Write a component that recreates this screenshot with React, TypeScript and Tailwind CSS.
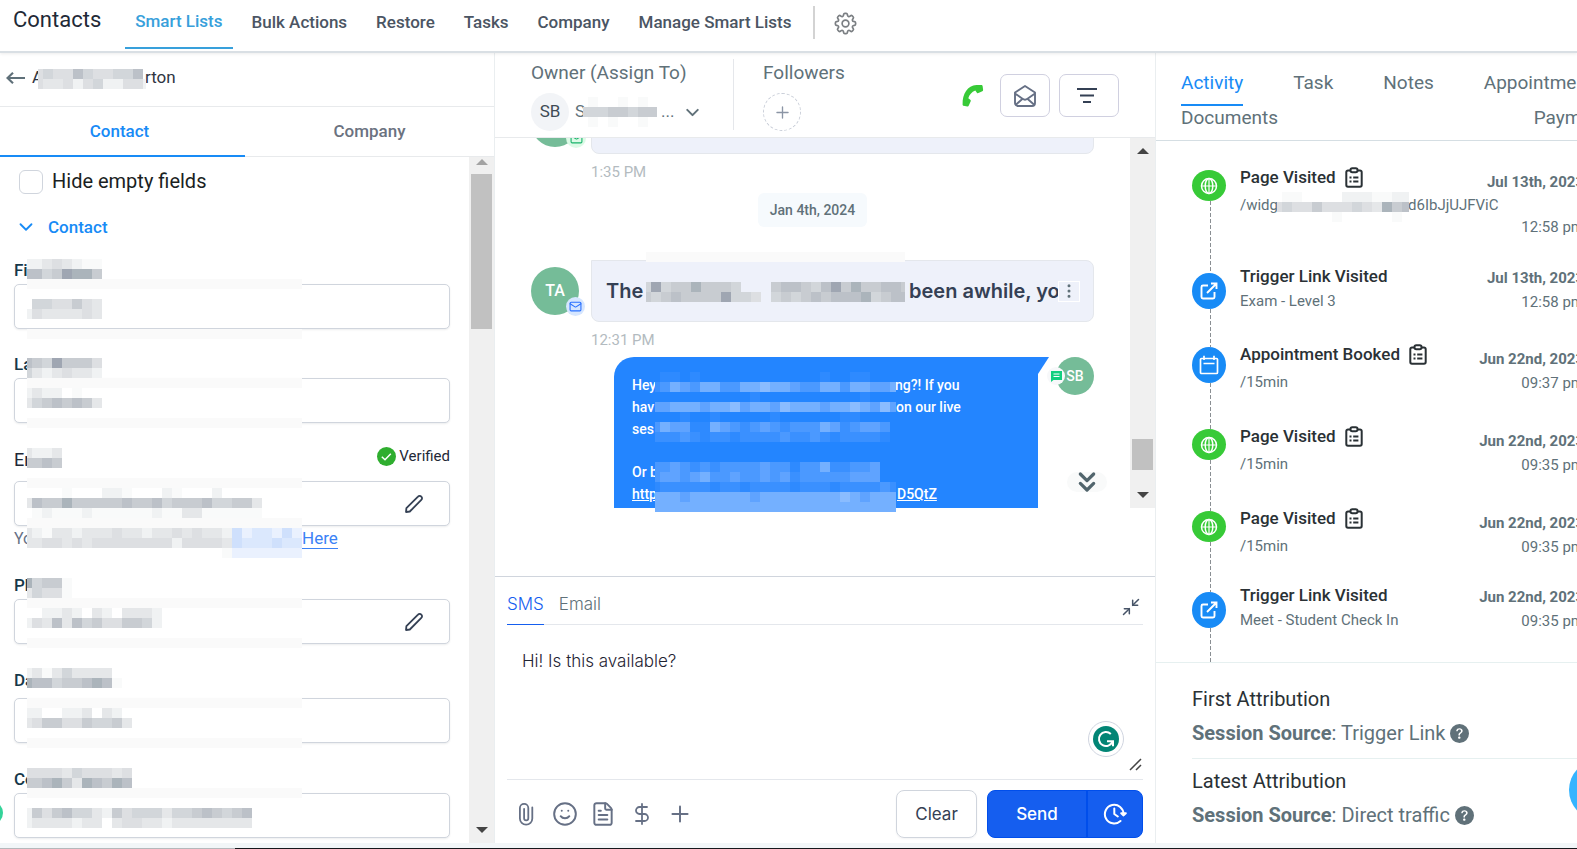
import React, { useState } from "react";
import {
  ChevronDown,
  ChevronsDown,
  DollarSign,
  FileText,
  Mail,
  Minimize2,
  MoreVertical,
  Plus,
  Smile,
} from "lucide-react";
import { HiOutlineCog8Tooth } from "react-icons/hi2";
import { BsFillQuestionCircleFill } from "react-icons/bs";

const SHADES: Record<string, string> = {
  a: "#f9fafa",
  b: "#f0f2f3",
  c: "#e5e7e9",
  d: "#dddfe2",
  e: "#d2d6da",
  f: "#c8ccd1",
  g: "#bcc1c8",
  h: "#abb4bb",
  i: "#9fa6b2",
  p: "#2e8aff",
  q: "#3a90ff",
  r: "#4b99ff",
  s: "#5fa3ff",
  t: "#74b0ff",
  u: "#8abcff",
  v: "#eaf1fe",
  w: "#dbe8fd",
  x: "#cfe0fc",
};

// Verpixelte Fläche: ein Zeichen je 10px-Kachel, "=" ist ein durchgehender Streifen
const Pixels = ({ rows, width, className }: { rows: string[]; width: number; className: string }) => (
  <svg
    width={width}
    height={rows.length * 10}
    viewBox={`5 0 ${width} ${rows.length * 10}`}
    shapeRendering="crispEdges"
    className={`pointer-events-none absolute ${className}`}
    aria-hidden="true"
  >
    {rows.map((row, y) =>
      row === "=" ? (
        <rect key={y} x={0} y={y * 10} width={width + 5} height={10} fill="#fafafa" />
      ) : (
        row
          .split("")
          .map((c, x) =>
            SHADES[c] ? <rect key={`${x}-${y}`} x={x * 10} y={y * 10} width={10} height={10} fill={SHADES[c]} /> : null
          )
      )
    )}
  </svg>
);

const PencilIcon = () => (
  <svg width="20" height="20" viewBox="0 0 20 20" fill="none" stroke="#344054" strokeWidth="1.8" strokeLinejoin="round">
    <path d="M2 18l.4-3.800L14 2.600a2.200 2.200 0 0 1 3.300 0 2.200 2.200 0 0 1 0 3.300L5.800 17.500z" />
  </svg>
);

const PaperclipIcon = () => (
  <svg width="16" height="24" viewBox="0 0 16 24" fill="none" stroke="#667085" strokeWidth="1.8" strokeLinecap="round">
    <path d="M14.3 5.5v11a6.2 6.2 0 0 1-12.4 0V6a4.2 4.2 0 0 1 8.4 0v10.2a2.1 2.1 0 0 1-4.2 0V6.8" />
  </svg>
);

const MailOpenIcon = () => (
  <svg width="24" height="24" viewBox="0 0 24 24" fill="none" stroke="#667085" strokeWidth="1.9" strokeLinejoin="round">
    <path d="M2 8.500L12 2l10 6.500V19a3 3 0 0 1-3 3H5a3 3 0 0 1-3-3z" />
    <path d="M2 9.500l7.500 5.300a4.200 4.200 0 0 0 5 0L22 9.500M2.800 20.800l6.800-6M21.200 20.800l-6.800-6" />
  </svg>
);

const PhoneIcon = () => (
  <svg width="24" height="24" viewBox="0 0 24 24" fill="#37ca37">
    <path d="M16.500 1h4.800c.8 0 1.200.4 1.300 1.100l.5 3.700c.1.700-.2 1.200-.8 1.500l-3.900 1.800c-.6.300-1.100.1-1.500-.4l-1.600-2.100c-3.600 1.500-6.100 4.300-7 7.700l2 1.500c.5.400.7.900.4 1.500l-1.900 4.300c-.3.700-.8.900-1.500.8l-3.700-.7c-.7-.1-1-.6-1-1.300C2.300 9.800 7.500 1.500 16.500 1z" />
  </svg>
);

const ClipboardIcon = () => (
  <svg width="18" height="21" viewBox="0 0 18 21" fill="none" stroke="#2a3135" strokeWidth="2">
    <path d="M5.500 3.500H3a1.700 1.700 0 0 0-1.700 1.700v12.900A1.700 1.700 0 0 0 3 19.800h12a1.700 1.700 0 0 0 1.700-1.700V5.200A1.700 1.700 0 0 0 15 3.500h-2.500" />
    <rect x="5.500" y="1.300" width="7" height="4" rx="1.700" />
    <path d="M4.500 10.500h2M8.200 10.500h5.200M4.500 14.500h2M8.200 14.500h5.200" strokeWidth="1.800" />
  </svg>
);

const GlobeIcon = () => (
  <svg width="18" height="18" viewBox="0 0 18 18" fill="none" stroke="#fff" strokeWidth="1.500">
    <circle cx="9" cy="9" r="7.500" />
    <ellipse cx="9" cy="9" rx="3.800" ry="7.500" />
    <path d="M9 1.500v15M2 9h14" strokeWidth="1.200" />
  </svg>
);

const LinkIcon = () => (
  <svg width="18" height="18" viewBox="0 0 18 18" fill="none" stroke="#fff" strokeWidth="1.900">
    <path d="M8 3.500H3a1.500 1.500 0 0 0-1.500 1.500v10A1.500 1.500 0 0 0 3 16.500h10a1.500 1.500 0 0 0 1.500-1.500v-5" />
    <path d="M11 1.500h5.500V7M16.500 1.500L7 11" />
  </svg>
);

const CalendarIcon = () => (
  <svg width="20" height="20" viewBox="0 0 20 20" fill="none" stroke="#fff" strokeWidth="1.700">
    <rect x="1.500" y="3.500" width="17" height="15" rx="1" />
    <path d="M5 .8V5M15 .8V5M4.500 8.500h11" />
  </svg>
);

const GrammarlyIcon = () => (
  <svg width="26" height="26" viewBox="0 0 26 26" fill="none">
    <circle cx="13" cy="13" r="13" fill="#028575" />
    <path d="M17.800 8A7 7 0 1 0 19.500 15.500M14 15.300h6v5" stroke="#fff" strokeWidth="2" />
  </svg>
);

const ClockIcon = () => (
  <svg width="24" height="24" viewBox="0 0 24 24" fill="none" stroke="#fff" strokeWidth="2" strokeLinecap="round" strokeLinejoin="round">
    <path d="M20.500 12.500A9.300 9.300 0 1 0 17.500 19" />
    <path d="M18.200 11.200l2.400 2.200 2.200-2.200zM11.300 6.500v5.500l3.500 2.500" />
  </svg>
);

// Scrollleiste
const Scrollbar = ({ children, up, className }: { children: React.ReactNode; up: string; className: string }) => (
  <div className={`flex w-[25px] shrink-0 flex-col items-center bg-[#f0f0f0] pb-[2px] ${className}`}>
    <svg width="12" height="6" viewBox="0 0 12 6" className="shrink-0">
      <path d="M6 0l6 6H0z" fill={up} />
    </svg>
    {children}
    <svg width="12" height="6" viewBox="0 0 12 6" className="mb-2 shrink-0">
      <path d="M0 0h12L6 6z" fill="#444" />
    </svg>
  </div>
);

const NAV = ["Bulk Actions", "Restore", "Tasks", "Company", "Manage Smart Lists"];

const TopNav = () => (
  <header className="relative z-10 flex h-[53px] shrink-0 items-start border-b-2 border-[#d9dfe4] bg-white pl-[13px] shadow-[0_1px_3px_rgba(0,0,0,0.08)]">
    <h1 className="mr-6 pt-[4px] text-[22px] leading-8 text-[#1f2a37]">Contacts</h1>
    <a href="#smart" className="h-[49px] border-b-2 border-[#38a0db] px-[10px] pt-[9px] text-[17px] leading-6 font-medium text-[#38a0db]">
      Smart Lists
    </a>
    <nav className="ml-[19px] flex gap-[29px] pt-[10px]">
      {NAV.map((item) => (
        <a key={item} href="#nav" className="text-[17px] leading-6 font-medium text-[#4b5563]">
          {item}
        </a>
      ))}
    </nav>
    <div className="mt-[6px] ml-[22px] h-[33px] w-[2px] bg-[#d3d3d3]" />
    <button type="button" aria-label="Settings" className="mt-[10px] ml-[17px] text-[#7b7f83]">
      <HiOutlineCog8Tooth size={27} />
    </button>
  </header>
);

type FieldProps = {
  id: string;
  label: string;
  rows: string[];
  pixelClass: string;
  className: string;
  labelClass?: string;
  editable?: boolean;
  extra?: React.ReactNode;
};

const Field = ({ id, label, rows, pixelClass, className, labelClass, editable, extra }: FieldProps) => (
  <div className={`relative ${className}`}>
    <div className="flex justify-between">
      <label htmlFor={id} className={labelClass ?? "h-6 text-[17px] leading-5 font-medium text-[#16384a]"}>
        {label}
      </label>
      {extra}
    </div>
    <div className="relative">
      <input
        id={id}
        type="text"
        className="block h-[45px] w-full rounded-[5px] border border-[#d0d5dd] bg-white px-3 shadow-[0_1px_2px_rgba(16,24,40,0.08)] outline-none"
      />
      {editable && (
        <button type="button" aria-label={`Edit ${id}`} className="absolute top-[13px] right-[26px]">
          <PencilIcon />
        </button>
      )}
    </div>
    <Pixels rows={rows} width={275} className={pixelClass} />
  </div>
);

const ContactPanel = () => {
  const [tab, setTab] = useState("Contact");

  return (
    <aside className="flex w-[495px] shrink-0 flex-col border-r border-[#eaeef0]">
      <div className="relative flex h-[54px] shrink-0 items-center border-b border-[#e8eaec] pb-1 pl-[6px] text-[17px] text-[#2f3542]">
        <button type="button" aria-label="Back" className="mr-[7px]">
          <svg width="19" height="12" viewBox="0 0 19 12" fill="none" stroke="#5f7079" strokeWidth="2.200">
            <path d="M19 6H1.500M7 .8L1.500 6 7 11.200" />
          </svg>
        </button>
        <span className="w-[113px]">A</span>
        <span>rton</span>
        <Pixels rows={["deddgeddeeg", "dccdbdebbddb"]} width={108} className="top-4 left-[38px]" />
      </div>
      <div className="flex h-[50px] shrink-0 border-b border-[#e8eaec]">
        {["Contact", "Company"].map((t) => (
          <button
            key={t}
            type="button"
            onClick={() => setTab(t)}
            className={
              tab === t
                ? "-mb-px w-[245px] border-b-2 border-[#188bf6] pt-[2px] pr-[6px] text-[17px] font-medium text-[#188bf6]"
                : "flex-1 border-b-2 border-transparent pt-[2px] text-[17px] font-medium text-[#6b7280]"
            }
          >
            {t}
          </button>
        ))}
      </div>
      <div className="flex min-h-0 flex-1">
        <div className="relative min-w-0 flex-1 overflow-hidden pr-[19px] pl-[14px]">
          <label className="flex items-center gap-[9px] pt-[10px] pl-[5px] text-[20px] leading-7 text-[#1b1f23]">
            <input type="checkbox" className="mt-[2px] h-6 w-6 appearance-none rounded-[6px] border border-[#d0d5dd] bg-white" />
            Hide empty fields
          </label>
          <button type="button" className="mt-5 flex items-center gap-[11px] pl-px text-[17px] leading-6 font-medium text-[#188bf6]">
            <ChevronDown size={22} strokeWidth={2} />
            Contact
          </button>
          <Field
            id="first"
            label="Fi"
            className="mt-[21px]"
            pixelClass="-top-px left-[13px]"
            rows={["bbcdcbaa", "ggefihhf", "=", "", ".eeddfdc", "bdccccdc", "", "="]}
          />
          <Field
            id="last"
            label="La"
            className="mt-[25px]"
            pixelClass="top-1 left-[13px]"
            rows={["gfeifffd", "ecbcdccb", "=", "bcbb.a", "cefgfgfc", "", "="]}
          />
          <Field
            id="email"
            label="Em"
            className="mt-[25px]"
            pixelClass="top-0 left-[13px]"
            labelClass="h-[33px] text-[18px] leading-6 text-[#1f2937]"
            editable
            extra={
              <span className="flex h-4 items-center gap-[3px] text-[15px] text-[#1f2937]">
                <svg width="19" height="19" viewBox="0 0 19 19" fill="none">
                  <circle cx="9.500" cy="9.500" r="9.500" fill="#2fae2f" />
                  <path d="M4.800 9.800l3.200 3 5.800-6" stroke="#fff" strokeWidth="1.500" />
                </svg>
                Verified
              </span>
            }
            rows={[
              "cbbc",
              "ffgf",
              "",
              "=",
              "....a...bba...ba...b",
              "cgffhfffffgffgefffgeeffc",
              ".abaaabaaaaaabaaccaaaaaa",
              "=",
              "cbaccbcccdccbccdcdccbxvwwvxv",
              "ccddcdcddddddddbddddcxwwwxwwv",
              "....................avvvvvvv",
            ]}
          />
          <p className="mt-[1px] flex h-6 text-[16px] leading-6 text-[#667085]">
            <span className="w-[288px]">Yo</span>
            <a href="#verify" className="h-[22px] border-b border-[#3b82f6] text-[17px] leading-[22px] text-[#3b82f6]">
              Here
            </a>
          </p>
          <Field
            id="phone"
            label="Ph"
            className="mt-6"
            pixelClass="top-[3px] left-[13px]"
            editable
            rows={["heffa", "cedda", "=", "..bbcb.cb.cccb", "bdcgcgefddffeb", "", "="]}
          />
          <Field
            id="dob"
            label="Da"
            className="mt-[25px]"
            pixelClass="-top-px left-[13px]"
            labelClass="h-[29px] text-[17px] leading-[22px] font-medium text-[#16384a]"
            rows={["bcacecccc", "hggeffghga", "", "=", "bb..bbc.cb", "cdffddfeefc", "", "="]}
          />
          <Field
            id="source"
            label="Co"
            className="mt-[26px]"
            pixelClass="-top-px left-[13px]"
            rows={["ddddcedddcd", "ffghfchgfhg", "=", "", "bfdfgeecbfdeeeceefgfefg", "bccccbcc.cddccbcccccccc"]}
          />
          {/* Fremdes Widget am linken Rand */}
          <div className="absolute bottom-[18px] -left-[21px] h-6 w-6 rounded-full bg-[#34d399]" />
        </div>
        <Scrollbar up="#a3a3a3" className="pt-[2px]">
          <div className="mt-[9px] mb-auto h-[155px] w-[21px] bg-[#c1c1c1]" />
        </Scrollbar>
      </div>
    </aside>
  );
};

const ConversationHeader = () => (
  <div className="flex h-[85px] shrink-0 border-b border-[#e8eaec] pl-9 text-[#607179]">
    <div className="relative w-[202px]">
      <p className="pt-[6px] text-[19px] leading-7">Owner (Assign To)</p>
      <button type="button" className="mt-[6px] flex items-center text-[17px]">
        <span className="flex h-[38px] w-[38px] items-center justify-center rounded-full bg-[#f2f4f7] text-[#3f4b55]">SB</span>
        <span className="ml-[6px] w-[86px] text-left">S</span>
        <span>...</span>
        <ChevronDown size={21} strokeWidth={2.3} className="ml-2" />
      </button>
      <Pixels rows={[".a..a.a", "eeeffeff", ".a.a..a"]} width={74} className="top-[44px] left-[52px]" />
    </div>
    <div className="mt-[6px] h-[71px] w-px bg-[#e5e7eb]" />
    <div className="ml-[29px]">
      <p className="pt-[6px] text-[19px] leading-7">Followers</p>
      <button type="button" aria-label="Add follower" className="mt-[6px] flex h-[38px] w-[38px] items-center justify-center rounded-full border border-dashed border-[#c9ced8] text-[#8b95a5]">
        <Plus size={19} strokeWidth={1.7} />
      </button>
    </div>
    <div className="mt-[21px] mr-9 ml-auto flex h-[43px] items-center">
      <button type="button" aria-label="Call" className="mr-4">
        <PhoneIcon />
      </button>
      <button type="button" aria-label="Mark unread" className="mr-[9px] flex h-[43px] w-[50px] items-center justify-center rounded-[7px] border border-[#d0d0e0]">
        <MailOpenIcon />
      </button>
      <button type="button" aria-label="Filter" className="flex h-[43px] w-[60px] items-center justify-center rounded-[7px] border border-[#d0d0e0] pr-1">
        <svg width="20" height="15" viewBox="0 0 20 15" stroke="#344054" strokeWidth="2">
          <path d="M0 1h20M3 7.500h14M6 14h8" />
        </svg>
      </button>
    </div>
  </div>
);

const Messages = () => (
  <div className="flex min-h-0 flex-1 pb-[68px]">
    <div className="flex min-w-0 flex-1 flex-col pr-9 pl-9">
      <div className="flex h-[16px] shrink-0 items-end gap-3 overflow-hidden">
        <div className="relative mb-[7px] h-12 w-12 shrink-0 rounded-full bg-[#75bc98]">
          <span className="absolute -right-[7px] -bottom-px flex h-[20px] w-[20px] items-center justify-center rounded-full bg-[#dcfae6]">
            <Mail size={13} color="#17b26a" />
          </span>
        </div>
        <div className="h-[62px] flex-1 rounded-[8px] border border-[#e4e7ec] bg-[#eef1fa]" />
      </div>
      <p className="mt-[6px] ml-[60px] text-[15px] leading-6 text-[#b3bbc0]">1:35 PM</p>
      <div className="mt-[9px] self-center rounded-[6px] bg-[#f6fafd] px-3 py-[5px] text-[14px] leading-6 font-medium text-[#607179]">
        Jan 4th, 2024
      </div>
      <div className="relative mt-[33px] flex items-start gap-3">
        <div className="relative mt-[7px] flex h-12 w-12 shrink-0 items-center justify-center rounded-full bg-[#75bc98] text-[16px] font-medium text-white">
          TA
          <span className="absolute -right-[6px] -bottom-px flex h-[19px] w-[19px] items-center justify-center rounded-full bg-[#d6e6fe]">
            <Mail size={13} color="#2970ff" />
          </span>
        </div>
        <div className="flex h-[62px] min-w-0 flex-1 items-center rounded-[8px] rounded-tl-none border border-[#e4e7ec] bg-[#eef1fa] pr-[13px] pl-[14px] font-['Inter',sans-serif] text-[20px] font-semibold text-[#344054]">
          <span className="w-[303px] shrink-0">The</span>
          <span className="min-w-0 flex-1 overflow-hidden whitespace-nowrap">been awhile, you</span>
          <button type="button" aria-label="More" className="flex h-[21px] w-[22px] shrink-0 items-center justify-center border border-white text-[#607179]">
            <MoreVertical size={18} />
          </button>
        </div>
        <Pixels
          width={259}
          className="-top-2 left-[115px]"
          rows={["=", "", "", "eieffhfffe...fggfegifhffggf", "fefgffffieed.efefgfggghefgg"]}
        />
      </div>
      <p className="mt-[6px] ml-[60px] text-[15px] leading-6 text-[#b3bbc0]">12:31 PM</p>
      <div className="relative mt-[5px] flex min-h-0 flex-1 justify-end">
        <div className="w-[424px] rounded-tl-[20px] bg-[#2385ff] px-[18px] pt-[17px] text-[14px] leading-[22px] font-medium text-white">
          <p className="flex">
            <span className="w-[263px]">Hey</span>ng?! If you
          </p>
          <p className="flex">
            <span className="w-[264px]">hav</span>on our live
          </p>
          <p>ses</p>
          <p className="mt-[21px]">Or b</p>
          <a href="#link" className="flex underline">
            <span className="w-[265px]">http</span>D5QtZ
          </a>
        </div>
        <svg width="11" height="17" viewBox="0 0 11 17" className="shrink-0" fill="#2385ff">
          <path d="M0 0h11L0 17z" />
        </svg>
        <div className="relative ml-[7px] flex h-[38px] w-[38px] items-center justify-center rounded-full bg-[#75bc98] text-[14px] font-medium text-white">
          SB
          <span className="absolute top-[10px] -left-[9px] flex h-[18px] w-[18px] items-center justify-center rounded-full bg-[#f7f8fa]">
            <svg width="11" height="11" viewBox="0 0 11 11">
              <path d="M0 0h11v9H2.500L0 11z" fill="#12cf80" />
              <path d="M2.500 3h6M2.500 5.500h6" stroke="#fff" />
            </svg>
          </span>
        </div>
        <button type="button" aria-label="Scroll to bottom" className="absolute -right-[13px] bottom-4 flex h-5 w-10 items-center justify-center rounded-full bg-[#f9fafa] text-[#52656d]">
          <ChevronsDown size={32} strokeWidth={2.4} className="shrink-0" />
        </button>
        <Pixels
          width={241}
          className="-bottom-1 left-[124px]"
          rows={[
            ".pp.p............p..pp..",
            "qrtsrttrrttuttsrrttrttsst",
            "..........p..........p..",
            "sstttsttusttsutttsttutsus",
            "...p..p.....p......pp...",
            "rtsspptsrqrsrqrrrtsqrssr",
            "qqqrqpqqpqqqqrqqrqpqqqqp",
            "",
            "",
            "rrsrqrqrrrrsrrprrtqqrrs",
            "rssrstrrsrrsrsqrrrrrsss",
            "pqqqqqpqqpqqqqpqqqpqqqqrq",
            "tttsttttttsttttttttutsttt",
            "ttttttttttttttttttttttttt",
          ]}
        />
      </div>
    </div>
    <Scrollbar up="#444" className="pt-[10px]">
      <div className="mt-auto mb-[22px] h-[31px] w-[21px] bg-[#c1c1c1]" />
    </Scrollbar>
  </div>
);

const Composer = () => {
  const [text, setText] = useState("Hi! Is this available?");

  return (
    <div className="shrink-0 border-t border-[#d0d5dd] pr-3 pl-3 font-['Inter',sans-serif]">
      <div className="flex h-[48px] items-end border-b border-[#e4e7ec] text-[17px] leading-6">
        <button type="button" className="-mb-px h-[33px] border-b border-[#155eef] pb-2 font-light text-[#155eef]">
          SMS
        </button>
        <button type="button" className="ml-[15px] h-8 pb-2 font-light text-[#607179]">
          Email
        </button>
        <button type="button" aria-label="Collapse" className="mr-[2px] mb-[7px] ml-auto text-[#475467]">
          <Minimize2 size={20} strokeWidth={1.8} />
        </button>
      </div>
      <div className="relative h-[155px] border-b border-[#e4e7ec]">
        <textarea
          aria-label="Message"
          value={text}
          onChange={(e) => setText(e.target.value)}
          className="block h-full w-full resize-none px-[15px] pt-6 text-[17px] leading-6 font-light text-[#1f2433] outline-none"
        />
        <span className="absolute right-[19px] bottom-[22px] flex h-9 w-9 items-center justify-center rounded-full border border-[#d0d5e0] bg-white">
          <GrammarlyIcon />
        </span>
        <svg width="13" height="13" viewBox="0 0 13 13" stroke="#444" strokeWidth="1.500" className="absolute right-px bottom-2">
          <path d="M1 12L12 1M7 12l5-5" />
        </svg>
      </div>
      <div className="flex h-[63px] items-center pt-[5px] text-[#667085]">
        <div className="flex flex-1 items-center pl-[11px]">
          <button type="button" aria-label="Attach">
            <PaperclipIcon />
          </button>
          <button type="button" aria-label="Emoji" className="ml-[18px]">
            <Smile size={26} strokeWidth={1.8} />
          </button>
          <button type="button" aria-label="Template" className="ml-3">
            <FileText size={26} strokeWidth={1.8} />
          </button>
          <button type="button" aria-label="Payment" className="ml-[14px]">
            <DollarSign size={24} strokeWidth={1.8} />
          </button>
          <button type="button" aria-label="More" className="ml-[13px]">
            <Plus size={26} strokeWidth={1.8} />
          </button>
        </div>
        <button type="button" className="h-12 w-[81px] rounded-[8px] border border-[#d0d5dd] pt-[2px] text-[17px] text-[#344054] shadow-[0_1px_2px_rgba(16,24,40,0.05)]">
          Clear
        </button>
        <div className="ml-[10px] flex h-12 overflow-hidden rounded-[8px] border border-[#004eeb] bg-[#155eef] text-white">
          <button type="button" className="w-[98px] pt-[2px] text-[17px] font-medium">
            Send
          </button>
          <button type="button" aria-label="Schedule" className="flex w-14 items-center justify-center border-l-2 border-[#004eeb]">
            <ClockIcon />
          </button>
        </div>
      </div>
    </div>
  );
};

type Activity = {
  title: string;
  sub: string;
  tail?: string;
  date: string;
  time: string;
  kind: "page" | "link" | "booking";
  height: string;
};

const ACTIVITIES: Activity[] = [
  { title: "Page Visited", sub: "/widg", tail: "d6IbJjUJFViC", date: "Jul 13th, 2023", time: "12:58 pm", kind: "page", height: "h-[103px]" },
  { title: "Trigger Link Visited", sub: "Exam - Level 3", date: "Jul 13th, 2023", time: "12:58 pm", kind: "link", height: "h-[74px]" },
  { title: "Appointment Booked", sub: "/15min", date: "Jun 22nd, 2023", time: "09:37 pm", kind: "booking", height: "h-[82px]" },
  { title: "Page Visited", sub: "/15min", date: "Jun 22nd, 2023", time: "09:35 pm", kind: "page", height: "h-[82px]" },
  { title: "Page Visited", sub: "/15min", date: "Jun 22nd, 2023", time: "09:35 pm", kind: "page", height: "h-[81px]" },
  { title: "Trigger Link Visited", sub: "Meet - Student Check In", date: "Jun 22nd, 2023", time: "09:35 pm", kind: "link", height: "h-[70px]" },
];

const ActivityRow = ({ item }: { item: Activity }) => {
  const isLink = item.kind === "link";

  return (
    <li className={`relative flex ${item.height}`}>
      <div className="flex w-[34px] flex-col items-center">
        <span
          className={
            item.kind === "page"
              ? "flex h-[31px] w-[34px] shrink-0 items-center justify-center rounded-[50%] bg-[#37ca37] text-white"
              : "flex h-9 w-[34px] shrink-0 items-center justify-center rounded-[50%] bg-[#188bf6] text-white"
          }
        >
          {item.kind === "page" && <GlobeIcon />}
          {isLink && <LinkIcon />}
          {item.kind === "booking" && <CalendarIcon />}
        </span>
        <svg className="ml-[3px] min-h-0 w-px flex-1">
          <line x1="0.5" y1="0" x2="0.5" y2="200" stroke="#8a8f93" strokeDasharray="4 2" />
        </svg>
      </div>
      <div className={isLink ? "-mt-[11px] ml-[14px]" : "-mt-[7px] ml-[14px]"}>
        <p className="flex items-center gap-[9px] text-[17px] leading-7 font-medium text-[#2a3135]">
          {item.title}
          {!isLink && <ClipboardIcon />}
        </p>
        <p className={isLink ? "flex text-[15px] leading-[22px] text-[#607179]" : "flex text-[15px] leading-7 text-[#607179]"}>
          <span>{item.sub}</span>
          {item.tail && <span className="ml-[130px]">{item.tail}</span>}
        </p>
      </div>
      <div
        className={
          item.tail
            ? "absolute -top-[2px] right-0 text-right text-[15px] leading-[44px] text-[#607179]"
            : isLink
              ? "absolute -top-[7px] right-0 text-right text-[15px] leading-6 text-[#607179]"
              : "absolute top-0 right-0 text-right text-[15px] leading-6 text-[#607179]"
        }
      >
        <p className={item.tail ? "leading-7 font-bold" : "leading-6 font-bold"}>{item.date}</p>
        <p className={item.tail ? "pt-[9px]" : ""}>{item.time}</p>
      </div>
      {item.tail && (
        <Pixels rows={[".aa....bbbaabb", "deddfdddedchfg", "......a.....a."]} width={132} className="top-[22px] left-[85px]" />
      )}
    </li>
  );
};

const Attribution = ({ title, value }: { title: string; value: string }) => (
  <div className="text-[20px] leading-[34px] text-[#607179]">
    <h3 className="text-[#2a3135]">{title}</h3>
    <p className="flex items-center">
      <b className="font-bold">Session Source</b>: {value}
      <BsFillQuestionCircleFill size={19} className="ml-[5px]" />
    </p>
  </div>
);

const ActivityPanel = () => (
  <aside className="relative w-[422px] shrink-0 overflow-hidden border-l border-[#eaeef0]">
    <div className="w-[470px]">
      <div className="h-[88px] border-b border-[#d5dee3] pr-2 pl-[25px] text-[19px] text-[#607179]">
        <div className="flex gap-[50px] pt-4">
          <a href="#activity" className="h-[37px] border-b-2 border-[#188bf6] leading-7 text-[#188bf6]">
            Activity
          </a>
          <a href="#task" className="leading-7">Task</a>
          <a href="#notes" className="leading-7">Notes</a>
          <a href="#appointments" className="leading-7">Appointments</a>
        </div>
        <div className="-mt-[2px] flex justify-between leading-7">
          <a href="#documents">Documents</a>
          <a href="#payments">Payments</a>
        </div>
      </div>
      <ul className="w-[428px] pt-[29px] pl-9">
        {ACTIVITIES.map((item, i) => (
          <ActivityRow key={i} item={item} />
        ))}
      </ul>
    </div>
    <div className="border-t border-[#e6f0f0] pt-[19px] pl-9">
      <div className="border-b border-[#e6f0f0] pb-2">
        <Attribution title="First Attribution" value="Trigger Link" />
      </div>
      <div className="pt-[5px]">
        <Attribution title="Latest Attribution" value="Direct traffic" />
      </div>
    </div>
    <button type="button" aria-label="Open chat" className="absolute -right-[52px] bottom-[23px] h-[60px] w-[60px] rounded-full bg-[#34b4ff]" />
  </aside>
);

export default function App() {
  return (
    <div className="flex h-screen flex-col overflow-hidden bg-white font-['Roboto',sans-serif]">
      <TopNav />
      <div className="flex min-h-0 flex-1">
        <ContactPanel />
        <main className="flex min-w-0 flex-1 flex-col">
          <ConversationHeader />
          <Messages />
          <Composer />
        </main>
        <ActivityPanel />
      </div>
      <footer className="flex h-[6px] shrink-0 items-end bg-[#f2f6f8]">
        <div className="h-px w-[235px] bg-[#b4b8bb]" />
        <div className="h-px flex-1 bg-[#15181c]" />
      </footer>
    </div>
  );
}
